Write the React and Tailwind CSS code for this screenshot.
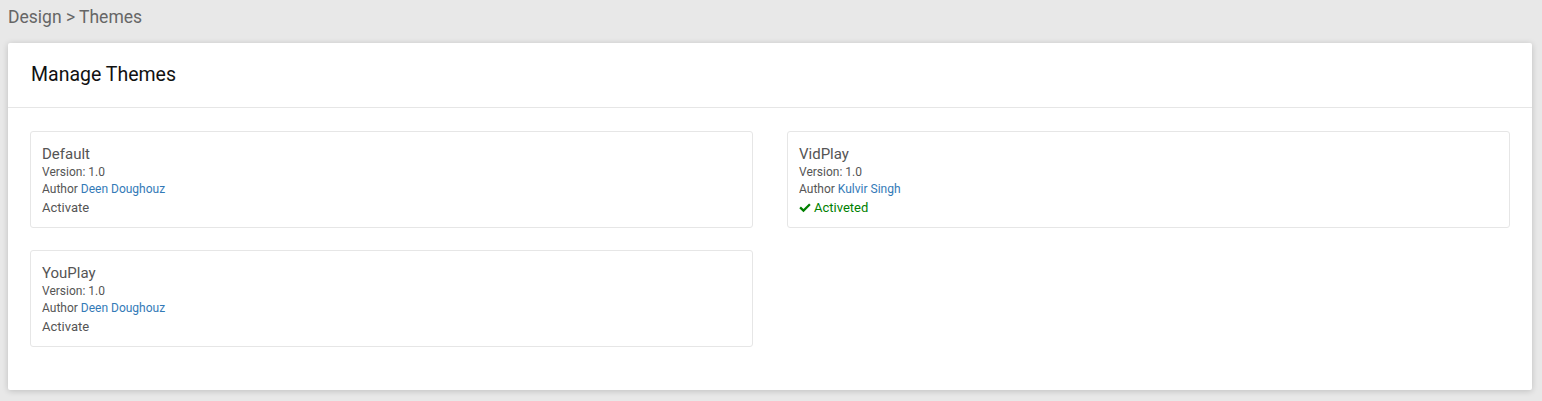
const themes = [
  { name: 'Default', version: '1.0', author: 'Deen Doughouz', active: false },
  { name: 'VidPlay', version: '1.0', author: 'Kulvir Singh', active: true },
  { name: 'YouPlay', version: '1.0', author: 'Deen Doughouz', active: false },
];

function ThemeCard({ theme }) {
  return (
    <div className="border border-[#e6e6e6] rounded-[3px] bg-white px-[11px] pt-[12px] pb-[10px] h-[97px]">
      <div className="text-[15px] leading-[20px] text-[#555]">{theme.name}</div>
      <div className="text-[12px] leading-[17px] text-[#555]">Version: {theme.version}</div>
      <div className="text-[12px] leading-[17px] text-[#555]">
        Author <a href="#" className="text-[#337ab7]">{theme.author}</a>
      </div>
      {theme.active ? (
        <div className="flex items-center gap-[3px] text-[13px] leading-[20px] text-[#008000]">
          <svg width="12" height="10" viewBox="0 0 12 10" fill="currentColor">
            <path d="M0.3 5.2 L1.9 3.6 L4.5 6.1 L10.1 0.5 L11.7 2.1 L4.5 9.3 Z" />
          </svg>
          Activeted
        </div>
      ) : (
        <div className="text-[13px] leading-[20px] text-[#555]">Activate</div>
      )}
    </div>
  );
}

export default function App() {
  return (
    <div className="min-h-[401px] bg-[#e8e8e8] pl-[8px] pb-[10px] pr-[10px]" style={{ fontFamily: 'Roboto, "Liberation Sans", sans-serif' }}>
      <div className="h-[43px] pt-[5px] text-[17.5px] leading-[24px] text-[#666]">Design &gt; Themes</div>
      <div className="bg-white rounded-[2px] shadow-[0_1px_6px_rgba(0,0,0,0.18)]">
        <div className="h-[65px] flex items-center px-[23px] border-b border-[#e6e6e6]">
          <h1 className="text-[19.5px] text-[#111]">Manage Themes</h1>
        </div>
        <div className="px-[22px] pt-[23px] pb-[43px]">
          <div className="grid grid-cols-2 gap-x-[34px] gap-y-[22px]">
            {themes.map((t) => (
              <ThemeCard key={t.name} theme={t} />
            ))}
          </div>
        </div>
      </div>
    </div>
  );
}
